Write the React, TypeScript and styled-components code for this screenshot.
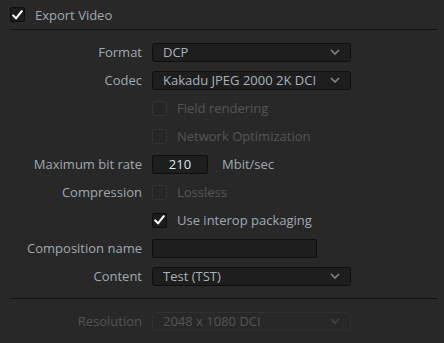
import React from "react";
import styled, { createGlobalStyle } from "styled-components";

const Global = createGlobalStyle`
  html, body { margin: 0; padding: 0; background: #282828; }
  body { font-family: "Open Sans", "Noto Sans", sans-serif; font-size: 13px; width: 444px; height: 343px; overflow: hidden; }
`;

const Panel = styled.div`
  display: flex;
  flex-direction: column;
  width: 444px;
  height: 343px;
  background: #282828;
`;

const Header = styled.label`
  display: flex;
  align-items: center;
  gap: 10px;
  height: 29px;
  padding: 0 0 0 10px;
  box-sizing: border-box;
  color: #a0a9b1;
  font-size: 13px;
`;

const Divider = styled.div<{ $mt?: number }>`
  height: 1px;
  background: #121212;
  margin: ${(p) => p.$mt ?? 0}px 7px 0 10px;
`;

const Form = styled.div<{ $pt: number }>`
  display: grid;
  grid-template-columns: 142px 1fr;
  grid-auto-rows: 28px;
  column-gap: 10px;
  padding-top: ${(p) => p.$pt}px;
`;

const Label = styled.div<{ $disabled?: boolean }>`
  display: flex;
  align-items: center;
  justify-content: flex-end;
  color: ${(p) => (p.$disabled ? "#545454" : "#a0a9b1")};
  white-space: nowrap;
`;

const Cell = styled.div`
  display: flex;
  align-items: center;
  gap: 10px;
`;

const Box = styled.span<{ $disabled?: boolean }>`
  display: inline-flex;
  align-items: center;
  justify-content: center;
  width: 15px;
  height: 15px;
  box-sizing: border-box;
  border-radius: 2px;
  border: 1px solid ${(p) => (p.$disabled ? "#333333" : "#0e0e0e")};
  background: ${(p) => (p.$disabled ? "#262626" : "#1c1c1c")};
  flex: none;
`;

const CheckText = styled.span<{ $disabled?: boolean }>`
  color: ${(p) => (p.$disabled ? "#555555" : "#a0a9b1")};
  white-space: nowrap;
`;

const Select = styled.div<{ $disabled?: boolean }>`
  display: flex;
  align-items: center;
  justify-content: space-between;
  width: 199px;
  height: 19px;
  box-sizing: border-box;
  padding: 0 10px 0 10px;
  border-radius: 3px;
  border: 1px solid ${(p) => (p.$disabled ? "#303030" : "#0f0f0f")};
  background: ${(p) => (p.$disabled ? "#282828" : "#1e1e1e")};
  color: ${(p) => (p.$disabled ? "#555555" : "#a9b3bc")};
  white-space: nowrap;
`;

const Input = styled.div<{ $w: number; $center?: boolean }>`
  display: flex;
  align-items: center;
  justify-content: ${(p) => (p.$center ? "center" : "flex-start")};
  width: ${(p) => p.$w}px;
  height: 19px;
  box-sizing: border-box;
  border-radius: 2px;
  border: 1px solid #0f0f0f;
  background: #1e1e1e;
  color: #dce6f0;
`;

const Unit = styled.span`
  color: #a0a9b1;
  margin-left: 4px;
`;

const Check = () => (
  <svg width="11" height="10" viewBox="0 0 11 10">
    <path d="M1.2 5.4 L4 8.4 L9.8 1.2" fill="none" stroke="#ffffff" strokeWidth="2.1" strokeLinecap="round" strokeLinejoin="round" />
  </svg>
);

const Chevron = ({ disabled }: { disabled?: boolean }) => (
  <svg width="10" height="6" viewBox="0 0 10 6">
    <path d="M1 1 L5 5 L9 1" fill="none" stroke={disabled ? "#444" : "#8a8a8a"} strokeWidth="1.5" />
  </svg>
);

const Dropdown = ({ value, disabled }: { value: string; disabled?: boolean }) => (
  <Select $disabled={disabled}>
    <span>{value}</span>
    <Chevron disabled={disabled} />
  </Select>
);

const CheckRow = ({ text, checked, disabled }: { text: string; checked?: boolean; disabled?: boolean }) => (
  <Cell>
    <Box $disabled={disabled}>{checked && <Check />}</Box>
    <CheckText $disabled={disabled}>{text}</CheckText>
  </Cell>
);

export default function App() {
  return (
    <Panel>
      <Global />
      <Header>
        <Box>
          <Check />
        </Box>
        <span>Export Video</span>
      </Header>
      <Divider />
      <Form $pt={8}>
        <Label>Format</Label>
        <Cell><Dropdown value="DCP" /></Cell>
        <Label>Codec</Label>
        <Cell><Dropdown value="Kakadu JPEG 2000 2K DCI" /></Cell>
        <Label />
        <CheckRow text="Field rendering" disabled />
        <Label />
        <CheckRow text="Network Optimization" disabled />
        <Label>Maximum bit rate</Label>
        <Cell>
          <Input $w={56} $center>210</Input>
          <Unit>Mbit/sec</Unit>
        </Cell>
        <Label>Compression</Label>
        <CheckRow text="Lossless" disabled />
        <Label />
        <CheckRow text="Use interop packaging" checked />
        <Label>Composition name</Label>
        <Cell><Input $w={165} /></Cell>
        <Label>Content</Label>
        <Cell><Dropdown value="Test (TST)" /></Cell>
      </Form>
      <Divider $mt={8} />
      <Form $pt={8}>
        <Label $disabled>Resolution</Label>
        <Cell><Dropdown value="2048 x 1080 DCI" disabled /></Cell>
      </Form>
    </Panel>
  );
}
